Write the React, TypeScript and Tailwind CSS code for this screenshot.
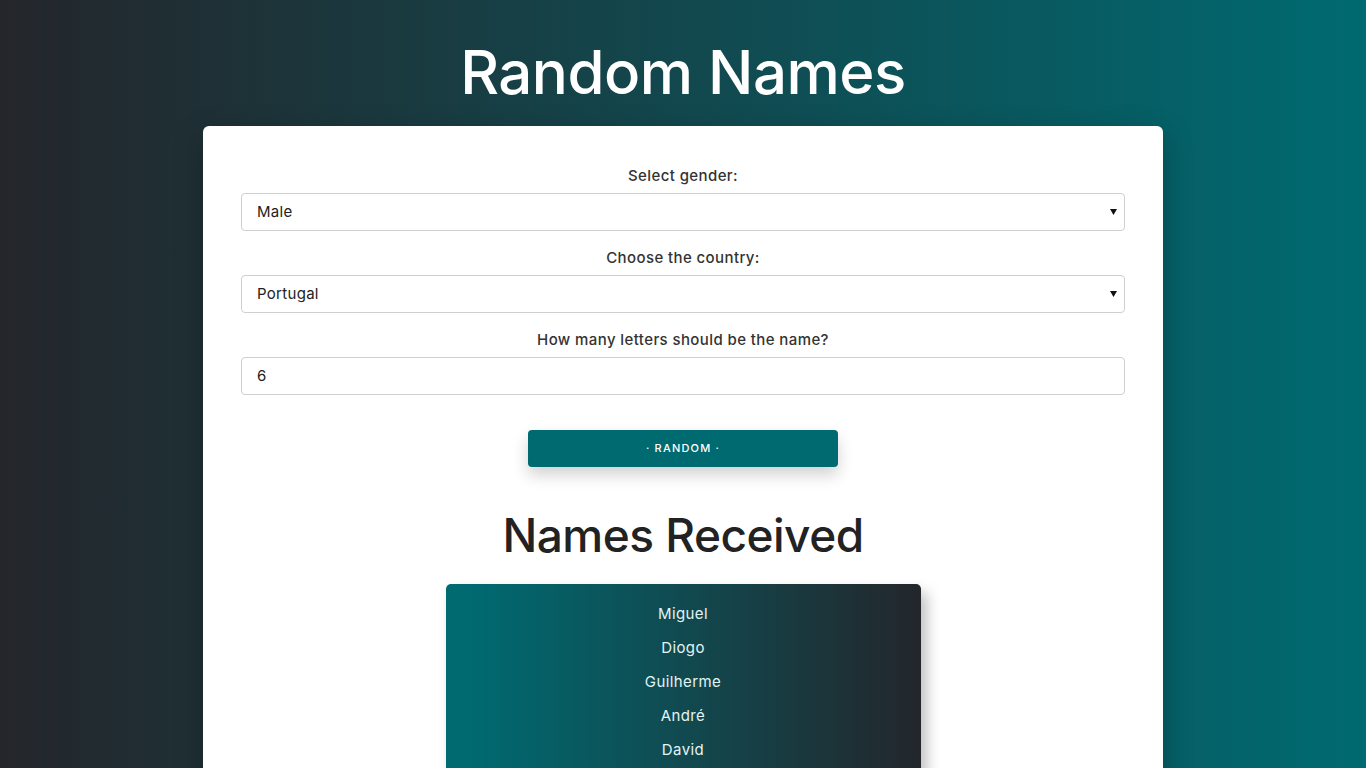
import React from "react";

export default function App() {
  const names = ["Miguel", "Diogo", "Guilherme", "André", "David", "Tiago", "Rafael"];
  return (
    <div
      className="min-h-screen w-full bg-[linear-gradient(to_right,#24262b,#006a71)] pb-10"
      style={{ fontFamily: "Inter, 'Noto Sans', sans-serif" }}
    >
      <h1 className="pt-[38px] text-center text-[60px] font-medium leading-[68px] tracking-[-0.5px] text-white">
        Random Names
      </h1>
      <div className="mx-auto mt-[20px] w-[960px] rounded-[6px] bg-white px-[38px] pt-[39px] pb-[60px] shadow-[0_10px_30px_rgba(0,0,0,0.25)]">
        <Field label="Select gender:">
          <SelectBox value="Male" />
        </Field>
        <Field label="Choose the country:">
          <SelectBox value="Portugal" />
        </Field>
        <Field label="How many letters should be the name?">
          <div className="flex h-[38px] items-center rounded-[4px] border border-[#cfcfcf] px-[15px] text-[15px] tracking-[0.3px] text-[#222]">
            6
          </div>
        </Field>
        <div className="mt-[35px] flex justify-center">
          <button className="h-[37px] w-[310px] rounded-[4px] bg-[#006a71] text-[11px] font-medium tracking-[1.2px] text-white shadow-[0_8px_16px_rgba(0,0,0,0.18)]">
            · RANDOM ·
          </button>
        </div>
        <h2 className="mt-[36px] text-center text-[46px] font-medium leading-[64px] tracking-[-0.5px] text-[#222]">
          Names Received
        </h2>
        <div className="mx-auto mt-[17px] w-[475px] rounded-[5px] bg-[linear-gradient(to_right,#006a71_5%,#23262b)] py-[13px] shadow-[6px_8px_14px_rgba(0,0,0,0.25)]">
          {names.map((n) => (
            <div key={n} className="h-[34px] text-center text-[15px] leading-[34px] tracking-[0.4px] text-[#e2f4f4]">
              {n}
            </div>
          ))}
        </div>
      </div>
    </div>
  );
}

function Field({ label, children }: { label: string; children: React.ReactNode }) {
  return (
    <div className="mb-[16px]">
      <div className="mb-[8px] pt-[1px] text-center text-[15px] font-medium leading-[19px] tracking-[0.4px] text-[#333]">{label}</div>
      {children}
    </div>
  );
}

function SelectBox({ value }: { value: string }) {
  return (
    <div className="flex h-[38px] items-center justify-between rounded-[4px] border border-[#cfcfcf] pl-[15px] pr-[6px] text-[15px] tracking-[0.3px] text-[#222]">
      <span>{value}</span>
      <svg width="7" height="6" viewBox="0 0 7 6" className="mr-[1px]">
        <path d="M0 0 H7 L3.5 6 Z" fill="#111" />
      </svg>
    </div>
  );
}
